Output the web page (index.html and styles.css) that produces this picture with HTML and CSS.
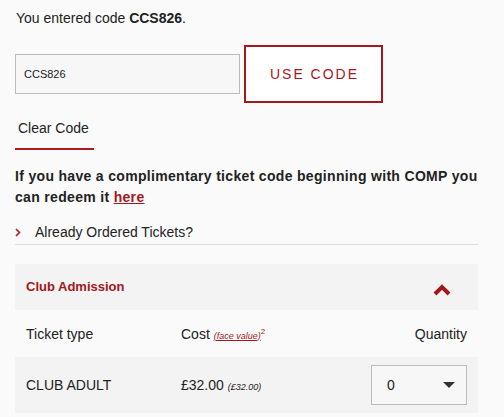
FILE: index.html
```html
<!DOCTYPE html>
<html>
<head>
<meta charset="utf-8">
<link rel="stylesheet" href="styles.css">
</head>
<body>
<div class="page">
  <p class="entered">You entered code <b>CCS826</b>.</p>
  <div class="code-row">
    <div class="code-input">CCS826</div>
    <button class="use-btn">USE CODE</button>
  </div>
  <div class="clear-wrap"><span class="clear">Clear Code</span></div>
  <p class="comp">If you have a complimentary ticket code beginning with COMP you can redeem it <a class="here">here</a></p>
  <div class="already">
    <svg class="chev-r" width="6" height="9" viewBox="0 0 6 9"><path d="M1 1 L4.5 4.5 L1 8" fill="none" stroke="#c4161c" stroke-width="1.6"/></svg>
    <span>Already Ordered Tickets?</span>
  </div>
  <div class="panel">
    <div class="panel-head">
      <span class="panel-title">Club Admission</span>
      <svg class="chev-up" width="18" height="12" viewBox="0 0 18 12"><path d="M2 10 L9 3 L16 10" fill="none" stroke="#a3181c" stroke-width="4"/></svg>
    </div>
    <div class="cols">
      <span class="c-type">Ticket type</span>
      <span class="c-cost">Cost <a class="fv">(face value)</a><sup class="sup">2</sup></span>
      <span class="c-qty">Quantity</span>
    </div>
    <div class="row">
      <span class="c-type">CLUB ADULT</span>
      <span class="c-cost">£32.00 <i class="small">(£32.00)</i></span>
      <span class="c-qty">
        <span class="select"><span>0</span><span class="caret"></span></span>
      </span>
    </div>
  </div>
</div>
</body>
</html>
```
FILE: styles.css
```css
html, body {
  margin: 0;
  padding: 0;
  background: #fafafa;
}
body {
  font-family: "Liberation Sans", Arial, sans-serif;
  color: #222;
  font-size: 14px;
}
.page {
  padding: 0 26px 0 15px;
}
.entered {
  margin: 0;
  padding-top: 8px;
  line-height: 21px;
  padding-left: 1px;
}
.entered b { font-weight: bold; }
.code-row {
  display: flex;
  align-items: center;
  margin-top: 16px;
  height: 58px;
}
.code-input {
  box-sizing: border-box;
  width: 225px;
  height: 40px;
  border: 1px solid #bbb;
  background: #f7f7f7;
  font-size: 11px;
  line-height: 38px;
  padding-left: 8px;
  color: #222;
}
.use-btn {
  box-sizing: border-box;
  margin-left: 4px;
  width: 139px;
  height: 58px;
  border: 2px solid #a3181c;
  background: #fff;
  color: #a3181c;
  font-family: "Liberation Sans", Arial, sans-serif;
  font-size: 14px;
  letter-spacing: 2px;
  padding: 0 0 0 2px;
  cursor: pointer;
}
.clear-wrap {
  margin-top: 15px;
}
.clear {
  display: inline-block;
  box-sizing: border-box;
  width: 79px;
  padding-left: 3px;
  line-height: 20px;
  padding-bottom: 10px;
  border-bottom: 2px solid #ae1a1e;
}
.comp {
  margin: 16px 0 0 0;
  font-weight: bold;
  line-height: 21px;
  letter-spacing: 0.32px;
}
.here {
  color: #a3181c;
  text-decoration: underline;
}
.already {
  display: flex;
  align-items: center;
  margin-top: 13px;
  height: 22px;
  padding-bottom: 1px;
  border-bottom: 1px solid #ddd;
}
.chev-r {
  margin-left: 0px;
  margin-right: 14px;
}
.panel {
  margin-top: 19px;
}
.panel-head {
  display: flex;
  justify-content: space-between;
  align-items: center;
  height: 46px;
  background: #f3f3f3;
  padding: 0 27px 0 11px;
}
.panel-title {
  color: #a3181c;
  font-weight: bold;
  font-size: 13px;
  margin-top: -1px;
}
.chev-up {
  margin-top: 6px;
}
.cols, .row {
  display: grid;
  grid-template-columns: 155px 1fr 120px;
  align-items: center;
  padding: 0 11px;
}
.cols {
  height: 47px;
}
.row {
  height: 56px;
  background: #f3f3f3;
}
.c-qty {
  justify-self: end;
}
.fv {
  color: #a3181c;
  font-style: italic;
  font-size: 9px;
  text-decoration: underline;
}
.sup {
  color: #a3181c;
  font-size: 8px;
  vertical-align: 5px;
  line-height: 0;
}
.small {
  font-size: 9px;
}
.select {
  box-sizing: border-box;
  display: flex;
  align-items: center;
  justify-content: space-between;
  width: 96px;
  height: 40px;
  border: 1px solid #bbb;
  background: #f7f7f7;
  padding: 0 11px 0 15px;
}
.caret {
  width: 0;
  height: 0;
  border-left: 6px solid transparent;
  border-right: 6px solid transparent;
  border-top: 6px solid #333;
}
```
